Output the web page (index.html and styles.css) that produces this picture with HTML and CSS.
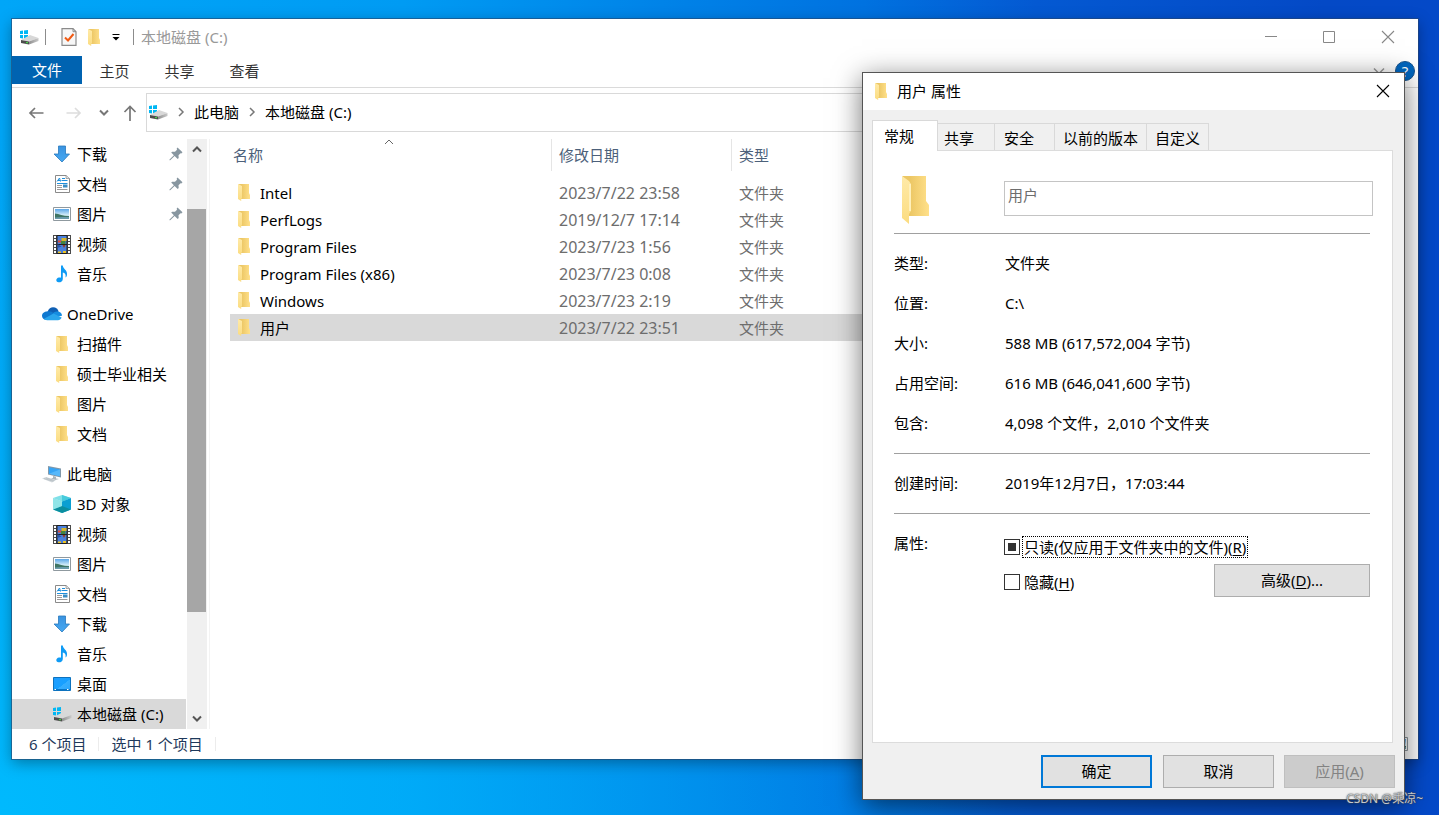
FILE: index.html
```html
<!DOCTYPE html>
<html lang="zh-CN">
<head>
<meta charset="utf-8">
<meta name="viewport" content="width=device-width, initial-scale=1">
<title>本地磁盘 (C:)</title>
<link rel="stylesheet" href="styles.css">
</head>
<body>
<svg class="defs" aria-hidden="true">
  <defs>
    <linearGradient id="g-folder" x1="0" x2="1" y1="0" y2="0"><stop offset="0.3" stop-color="#ecc765"/><stop offset="1" stop-color="#ffe08a"/></linearGradient>
    <linearGradient id="g-flap" x1="0" x2="0" y1="0" y2="1"><stop offset="0" stop-color="#ffeaa8"/><stop offset="1" stop-color="#fbdc80"/></linearGradient>
    <linearGradient id="g-down" x1="0" x2="0" y1="0" y2="1"><stop offset="0" stop-color="#3a93e0"/><stop offset="1" stop-color="#45a8f2"/></linearGradient>
    <linearGradient id="g-sky" x1="0" x2="0" y1="0" y2="1"><stop offset="0" stop-color="#5aa6e8"/><stop offset="0.6" stop-color="#d4ecf8"/></linearGradient>
    <linearGradient id="g-drive" x1="0" x2="1" y1="0" y2="0"><stop offset="0" stop-color="#8f8f8f"/><stop offset="1" stop-color="#c9c9c9"/></linearGradient>
    <linearGradient id="g-desk" x1="0" x2="1" y1="0" y2="1"><stop offset="0" stop-color="#1f9dff"/><stop offset="0.55" stop-color="#17a0ff"/><stop offset="0.56" stop-color="#35aeff"/><stop offset="1" stop-color="#2ba6fb"/></linearGradient>
  </defs>
  <symbol id="i-folder" viewBox="0 0 12 17">
    <path d="M0 0H11V9L12 11V15H3V3Z" fill="url(#g-folder)"/>
    <path d="M0 0L4 2V14L3.200 15V17L0 15Z" fill="url(#g-flap)"/>
  </symbol>
  <symbol id="i-folder-lg" viewBox="0 0 28 48">
    <path d="M1 0H25V25L28 29V40H8V8Z" fill="url(#g-folder)"/>
    <path d="M1 0L8 5L10 8V35L8 38V48L1 42Z" fill="url(#g-flap)"/>
    <path d="M8 8L10 8V35H8Z" fill="#fff0bb"/>
  </symbol>
  <symbol id="i-drive" viewBox="0 0 20 16">
    <path d="M1 2L4 1.500V5H1ZM5 1.400L9 1V5H5ZM1 6H4V9.500L1 9ZM5 6H9V10L5 9.600Z" fill="#00b7f4"/>
    <path d="M2 11L11 6L19.500 9L10 12.500Z" fill="#d8d8d8"/>
    <path d="M2 11L10 12.500V15.500L2 14Z" fill="#4c4c4c"/>
    <path d="M10 12.500L19.500 9V12L10 15.500Z" fill="url(#g-drive)"/>
    <path d="M7 13h2v1.200H7z" fill="#48d348"/>
  </symbol>
  <symbol id="i-down" viewBox="0 0 18 18">
    <path d="M5.500 1h7v8h4L9 17L1 9h4.500Z" fill="url(#g-down)" stroke="#2878bd" stroke-width="0.800"/>
  </symbol>
  <symbol id="i-doc" viewBox="0 0 18 18">
    <path d="M2.500 0.500H13L16.500 3.500V17.500H2.500Z" fill="#fff" stroke="#8a8a8a"/>
    <path d="M13 0.500V3.500H16.500" fill="#ddd" stroke="#8a8a8a" stroke-width="0.700"/>
    <path d="M4 6.500L6.500 3L7.500 6.500M5 5.500H7.500M9 3.500H12M8.500 5.500H14.500M4 8.500H14.500" fill="none" stroke="#1e8fdc"/>
    <path d="M10 9.500h4.500v3h-4.500z" fill="#3c8ec4"/>
    <path d="M4 10.500H9M4 12.500H9M4 14.500H14.500" stroke="#9a9a9a"/>
  </symbol>
  <symbol id="i-pic" viewBox="0 0 18 18">
    <path d="M0.500 2.500h17v13H0.500z" fill="#fff" stroke="#8f999f"/>
    <path d="M2 4h14v10H2z" fill="url(#g-sky)"/>
    <path d="M2 8.500C6 9 10 11 16 11V14H2Z" fill="#3f7564"/>
    <path d="M2 12.500C7 12 11 12 16 12V14H2Z" fill="#6a9aab"/>
  </symbol>
  <symbol id="i-video" viewBox="0 0 18 19">
    <path d="M0 0h18v19H0z" fill="#4a4a4a"/>
    <path d="M3.500 0h11v19h-11z" fill="#222"/>
    <path d="M4.500 1h9v8h-9zM4.500 10h9v8h-9z" fill="#4a80dc"/>
    <path d="M1 1h2v2H1zM1 4h2v2H1zM1 7h2v2H1zM1 10h2v2H1zM1 13h2v2H1zM1 16h2v2H1zM15 1h2v2h-2zM15 4h2v2h-2zM15 7h2v2h-2zM15 10h2v2h-2zM15 13h2v2h-2zM15 16h2v2h-2z" fill="#fff"/>
    <path d="M8.500 3h5v3h-5z" fill="#d7b52c"/><path d="M5 5.500h3.500V7.500H5z" fill="#e34b34"/><path d="M8 6h4.500v3H8z" fill="#45843f"/>
    <path d="M9.500 10h3l-1.500 3z" fill="#9c3c22"/><path d="M5 16.500h3V18H5zM10 16h3v2h-3z" fill="#f0c422"/><path d="M4.500 9l4 2.500-4 1.500z" fill="#2d56a8"/>
  </symbol>
  <symbol id="i-music" viewBox="0 0 18 18">
    <path d="M8 0.500H9.800C10 4 14.500 5 14 9.500C14 11 13.300 12 12.500 12.500C13.200 9.500 12 8 9.800 7.500V14C9.800 16.500 7.500 17.500 5.500 17.300C2.500 17 2.500 13 6 12.500C7 12.300 7.500 12.500 8 12.700Z" fill="#0f9bf5"/>
  </symbol>
  <symbol id="i-cloud" viewBox="0 0 20 14">
    <path d="M5.500 5C6.500 1.500 9 0.300 11 0.300C14 0.300 16 2.200 16.600 4.600L11 8Z" fill="#0f5fb4"/>
    <path d="M5 4.500C8 4 10 5 12 6.500L4 12.800C1.500 12.700 0 11 0 8.800C0 6.300 2.500 4.500 5 4.500Z" fill="#1079d0"/>
    <path d="M11 6C13 4.500 15 4.300 16.500 4.500C19 5 20 7 20 8.800L13 10Z" fill="#168ce0"/>
    <path d="M2 11.800L11.500 6.400L19.600 10.500C19 12.500 17.500 13.200 16 13.200H5C3.800 13.200 2.800 12.800 2 11.800Z" fill="#2aa5ec"/>
  </symbol>
  <symbol id="i-pc" viewBox="0 0 20 18">
    <path d="M6 1L19 3.500V12.500L6 9.500Z" fill="#8098aa"/>
    <path d="M7 2.200L18 4.500V11.300L7 8.700Z" fill="#36a4f5"/>
    <path d="M7 8.700L18 4.500V11.300Z" fill="#57b8fa"/>
    <path d="M11 11L14 11.700V13.500L17 14L13 15L9 13.500L11 13Z" fill="#aab4ba"/>
    <path d="M0 13.500L4 12L14 15L10 17.500Z" fill="#d3d9dd"/>
    <path d="M2 13.600L11.500 16.300M4 12.900L12.500 15.600" stroke="#a9b3b9" stroke-width="0.600"/>
  </symbol>
  <symbol id="i-cube" viewBox="0 0 18 18">
    <path d="M9 0L18 3L9 6.500L0 3Z" fill="#7fe0e8"/>
    <path d="M9 0L18 3L9 6.500Z" fill="#47cbdc"/>
    <path d="M0 3L9 6.500V18L0 14.500Z" fill="#58d7dd"/>
    <path d="M18 3L9 6.500V18L18 14.500Z" fill="#0a9fd2"/>
    <path d="M0 14.500L9 11L18 14.500L9 18Z" fill="#0b8e9f"/>
    <path d="M0 14.500L9 11V6.500L0 3Z" fill="#b5eef0" opacity="0.600"/>
  </symbol>
  <symbol id="i-desk" viewBox="0 0 18 18">
    <path d="M0.500 2.500h17v13H0.500z" fill="url(#g-desk)" stroke="#0d72be"/>
    <path d="M1 14.500h16" stroke="#0876c8"/><path d="M1.500 14.500h1.500M14 14.500h1.500" stroke="#fff"/>
  </symbol>
  <symbol id="i-pin" viewBox="0 0 14 14">
    <path d="M8.500 0.500L13.500 5.200L12.300 6.400L11.500 6.200L9.500 8.300L9.700 11L8.700 12L5.600 9L1.200 13.300L0.500 13.300V12.500L4.900 8.300L2.200 5.600L3.200 4.700L6 4.800L8 2.800L7.700 1.400Z" fill="#8796a0"/>
  </symbol>
  <symbol id="i-close" viewBox="0 0 14 14"><path d="M1 1L13 13M13 1L1 13" fill="none" stroke="currentColor" stroke-width="1.100"/></symbol>
  <symbol id="i-chev" viewBox="0 0 12 8"><path d="M2 1.500L6 5.500L10 1.500" fill="none" stroke="currentColor" stroke-width="2"/></symbol>
  <symbol id="i-right" viewBox="0 0 8 12"><path d="M2 2L6 6L2 10" fill="none" stroke="currentColor" stroke-width="1.500"/></symbol>
</svg>

<main class="desktop">
  <section class="window" aria-label="本地磁盘 (C:)">
    <header class="titlebar">
      <svg class="ic-drive"><use href="#i-drive"/></svg>
      <span class="rule"></span>
      <button class="quick" aria-label="属性"><svg class="ic-props" viewBox="0 0 16 18"><path d="M1 0.700H12L15 3.700V17.300H1Z" fill="#f7f7f7" stroke="#8b8b8b" stroke-width="1.200"/><path d="M12 0.700V3.700H15" fill="none" stroke="#8b8b8b"/><path d="M4 9.500L7 12.500L12.500 6" fill="none" stroke="#f05a14" stroke-width="2"/></svg></button>
      <button class="quick" aria-label="新建文件夹"><svg class="ic-folder"><use href="#i-folder"/></svg></button>
      <button class="quick" aria-label="自定义快速访问工具栏"><svg class="ic-menu" viewBox="0 0 8 8"><path d="M0.500 1.500H7.500" stroke="#000"/><path d="M0.500 4H7.500L4 7.500Z" fill="#000"/></svg></button>
      <span class="rule"></span>
      <h1 class="title">本地磁盘 (C:)</h1>
      <div class="controls">
        <button aria-label="最小化"><svg class="ic-ctl" viewBox="0 0 14 14"><path d="M1 6.500H13" stroke="currentColor"/></svg></button>
        <button aria-label="最大化"><svg class="ic-ctl" viewBox="0 0 14 14"><path d="M1.500 1.500h11v11h-11z" fill="none" stroke="currentColor"/></svg></button>
        <button aria-label="关闭"><svg class="ic-ctl"><use href="#i-close"/></svg></button>
      </div>
    </header>
    <nav class="ribbon">
      <button class="ribbon-tab file">文件</button>
      <button class="ribbon-tab">主页</button>
      <button class="ribbon-tab">共享</button>
      <button class="ribbon-tab">查看</button>
      <span class="grow"></span>
      <button class="expand" aria-label="展开功能区"><svg class="ic-expand" viewBox="0 0 12 8"><path d="M1 1.500L6 6.500L11 1.500" fill="none" stroke="currentColor" stroke-width="1.500"/></svg></button>
      <button class="help" aria-label="帮助">?</button>
    </nav>
    <div class="navbar">
      <div class="arrows">
        <button aria-label="后退"><svg class="ic-arrow" viewBox="0 0 16 16"><path d="M15.500 8H2M7 3L2 8L7 13" fill="none" stroke="#777" stroke-width="1.700"/></svg></button>
        <button aria-label="前进"><svg class="ic-arrow" viewBox="0 0 16 16"><path d="M0.500 8H14M9 3L14 8L9 13" fill="none" stroke="#ddd" stroke-width="1.700"/></svg></button>
        <button aria-label="最近位置"><svg class="ic-chev"><use href="#i-chev"/></svg></button>
        <button aria-label="上移"><svg class="ic-arrow" viewBox="0 0 16 16"><path d="M8 16V2M2.500 7L8 1.500L13.500 7" fill="none" stroke="#777" stroke-width="1.700"/></svg></button>
      </div>
      <div class="address">
        <svg class="ic-drive"><use href="#i-drive"/></svg>
        <svg class="ic-right"><use href="#i-right"/></svg>
        <a href="#pc">此电脑</a>
        <svg class="ic-right"><use href="#i-right"/></svg>
        <a href="#c">本地磁盘 (C:)</a>
      </div>
    </div>
    <div class="panes">
      <nav class="tree">
        <ul>
          <li><svg class="ic"><use href="#i-down"/></svg>下载<svg class="pin"><use href="#i-pin"/></svg></li>
          <li><svg class="ic"><use href="#i-doc"/></svg>文档<svg class="pin"><use href="#i-pin"/></svg></li>
          <li><svg class="ic"><use href="#i-pic"/></svg>图片<svg class="pin"><use href="#i-pin"/></svg></li>
          <li><svg class="ic tall"><use href="#i-video"/></svg>视频</li>
          <li><svg class="ic"><use href="#i-music"/></svg>音乐</li>
        </ul>
        <ul>
          <li class="root"><svg class="ic-root"><use href="#i-cloud"/></svg>OneDrive</li>
          <li><svg class="ic small"><use href="#i-folder"/></svg>扫描件</li>
          <li><svg class="ic small"><use href="#i-folder"/></svg>硕士毕业相关</li>
          <li><svg class="ic small"><use href="#i-folder"/></svg>图片</li>
          <li><svg class="ic small"><use href="#i-folder"/></svg>文档</li>
        </ul>
        <ul>
          <li class="root"><svg class="ic-root"><use href="#i-pc"/></svg>此电脑</li>
          <li><svg class="ic"><use href="#i-cube"/></svg>3D 对象</li>
          <li><svg class="ic tall"><use href="#i-video"/></svg>视频</li>
          <li><svg class="ic"><use href="#i-pic"/></svg>图片</li>
          <li><svg class="ic"><use href="#i-doc"/></svg>文档</li>
          <li><svg class="ic"><use href="#i-down"/></svg>下载</li>
          <li><svg class="ic"><use href="#i-music"/></svg>音乐</li>
          <li><svg class="ic"><use href="#i-desk"/></svg>桌面</li>
          <li class="drive selected"><svg class="ic-drive"><use href="#i-drive"/></svg>本地磁盘 (C:)</li>
        </ul>
      </nav>
      <div class="scrollbar">
        <button aria-label="向上滚动"><svg class="ic-scroll up"><use href="#i-chev"/></svg></button>
        <span class="track-before"></span>
        <span class="thumb"></span>
        <span class="track-after"></span>
        <button aria-label="向下滚动"><svg class="ic-scroll"><use href="#i-chev"/></svg></button>
      </div>
      <div class="list">
        <table class="files">
          <colgroup><col class="col-name"><col class="col-date"><col></colgroup>
          <thead>
            <tr>
              <th><div class="head">名称<svg class="sort" viewBox="0 0 10 6"><path d="M1 5L5 1L9 5" fill="none" stroke="#666"/></svg></div></th>
              <th><div class="head">修改日期</div></th>
              <th><div class="head last">类型</div></th>
            </tr>
          </thead>
          <tbody>
            <tr><td><div class="name"><svg class="ic-folder"><use href="#i-folder"/></svg>Intel</div></td><td class="date">2023/7/22 23:58</td><td>文件夹</td></tr>
            <tr><td><div class="name"><svg class="ic-folder"><use href="#i-folder"/></svg>PerfLogs</div></td><td class="date">2019/12/7 17:14</td><td>文件夹</td></tr>
            <tr><td><div class="name"><svg class="ic-folder"><use href="#i-folder"/></svg>Program Files</div></td><td class="date">2023/7/23 1:56</td><td>文件夹</td></tr>
            <tr><td><div class="name"><svg class="ic-folder"><use href="#i-folder"/></svg>Program Files (x86)</div></td><td class="date">2023/7/23 0:08</td><td>文件夹</td></tr>
            <tr><td><div class="name"><svg class="ic-folder"><use href="#i-folder"/></svg>Windows</div></td><td class="date">2023/7/23 2:19</td><td>文件夹</td></tr>
            <tr class="selected"><td><div class="name"><svg class="ic-folder"><use href="#i-folder"/></svg>用户</div></td><td class="date">2023/7/22 23:51</td><td>文件夹</td></tr>
          </tbody>
        </table>
      </div>
    </div>
    <footer class="status">
      <span>6 个项目</span>
      <span>选中 1 个项目</span>
      <button class="view" aria-label="大缩略图"><svg class="ic"><use href="#i-pic"/></svg></button>
    </footer>
  </section>

  <section class="dialog" role="dialog" aria-label="用户 属性">
    <header class="dialog-title">
      <svg class="ic-folder"><use href="#i-folder"/></svg>
      <h2 class="dialog-name">用户 属性</h2>
      <button class="dialog-close" aria-label="关闭"><svg class="ic-ctl"><use href="#i-close"/></svg></button>
    </header>
    <div class="tabs" role="tablist">
      <button class="tab active" role="tab" aria-selected="true">常规</button>
      <button class="tab t-share" role="tab">共享</button>
      <button class="tab t-safe" role="tab">安全</button>
      <button class="tab" role="tab">以前的版本</button>
      <button class="tab" role="tab">自定义</button>
    </div>
    <div class="sheet">
      <div class="identity">
        <svg class="big-folder"><use href="#i-folder-lg"/></svg>
        <input class="name-box" type="text" value="用户" aria-label="文件夹名称">
      </div>
      <dl class="facts">
        <dt>类型:</dt><dd>文件夹</dd>
        <dt>位置:</dt><dd>C:\</dd>
        <dt>大小:</dt><dd>588 MB (617,572,004 字节)</dd>
        <dt>占用空间:</dt><dd>616 MB (646,041,600 字节)</dd>
        <dt>包含:</dt><dd>4,098 个文件，2,010 个文件夹</dd>
      </dl>
      <dl class="facts">
        <dt>创建时间:</dt><dd>2019年12月7日，17:03:44</dd>
      </dl>
      <div class="attrs">
        <span class="attrs-label">属性:</span>
        <div class="checks">
          <label class="check"><input class="mixed" type="checkbox"><span class="focus">只读(仅应用于文件夹中的文件)(<u>R</u>)</span></label>
          <label class="check"><input type="checkbox"><span>隐藏(<u>H</u>)</span></label>
        </div>
        <button class="btn advanced">高级(<u>D</u>)...</button>
      </div>
    </div>
    <footer class="actions">
      <button class="btn primary">确定</button>
      <button class="btn">取消</button>
      <button class="btn" disabled>应用(<u>A</u>)</button>
    </footer>
  </section>
  <p class="watermark">CSDN @乘凉~</p>
</main>
</body>
</html>
```

FILE: styles.css
```css
* { box-sizing: border-box; }
body {
  margin: 0;
  font: 15px/20px "Noto Sans", "Noto Sans CJK SC", sans-serif;
  color: #000;
}
h1, h2, p, ul, dl, dd { margin: 0; padding: 0; font-size: inherit; font-weight: 400; }
ul { list-style: none; }
button, input { font: inherit; color: inherit; }
button { margin: 0; padding: 0; border: 0; background: none; display: flex; align-items: center; justify-content: center; white-space: nowrap; }
svg { display: block; flex: none; }
a { color: inherit; text-decoration: none; }
.defs { position: absolute; width: 0; height: 0; }

.desktop {
  position: relative;
  height: 100vh;
  min-height: 780px;
  overflow: hidden;
  background:
    radial-gradient(ellipse 70% 90% at 0 100%, rgba(0, 192, 255, 0.75), rgba(0, 180, 250, 0.5) 50%, rgba(0, 170, 250, 0)),
    linear-gradient(to right, #00a6f8 0, #009bf3 28%, #0083e8 46%, #0072e0 60%, #0459d2 72%, #0449c6 92%, #0449c8);
}

/* Explorer window */
.window {
  position: absolute;
  inset: 19px 21px 56px 12px;
  display: flex;
  flex-direction: column;
  background: #fff;
  outline: 1px solid rgba(40, 70, 110, 0.6);
  box-shadow: 0 4px 14px rgba(0, 0, 0, 0.35);
}
.titlebar { display: flex; align-items: center; height: 37px; padding: 0 0 1px 7px; color: #999; }
.rule { width: 1px; height: 16px; margin: 0 7px 0 6px; background: #8c8c8c; }
.ic-drive { width: 20px; height: 16px; }
.ic-props { width: 16px; height: 18px; margin: 0 11px 0 8px; }
.ic-folder { width: 12px; height: 17px; }
.ic-menu { width: 8px; height: 8px; margin: 0 7px 0 12px; }
.title { flex: 1; }
.controls { display: flex; color: #888; }
.controls button { width: 58px; height: 36px; }
.controls button:last-child { width: 60px; }
.ic-ctl { width: 14px; height: 14px; }
.ribbon { display: flex; align-items: flex-start; height: 32px; padding-right: 3px; border-bottom: 1px solid #dadada; color: #333; }
.ribbon-tab { width: 65px; height: 30px; }
.ribbon-tab.file { width: 70px; height: 28px; background: #0063b1; color: #fff; }
.grow { flex: 1; }
.expand { width: 20px; height: 30px; margin-right: 6px; color: #999; }
.ic-expand { width: 12px; height: 8px; }
.help { width: 20px; height: 20px; margin-top: 5px; border: 1px solid #17528c; border-radius: 50%; background: #0067c0; color: #fff; }
.navbar { display: flex; padding: 5px 13px 0 0; height: 51px; }
.arrows { display: flex; align-items: center; gap: 22px; width: 134px; height: 39px; padding-left: 16px; color: #777; }
.arrows button:nth-child(3) { margin-right: -10px; margin-left: -6px; }
.ic-arrow { width: 16px; height: 16px; }
.ic-chev { width: 12px; height: 8px; }
.address { flex: 1; display: flex; align-items: center; height: 39px; padding: 0 0 1px 1px; border: 1px solid #d9d9d9; }
.ic-right { width: 8px; height: 12px; margin: 0 9px; color: #777; }

.panes { flex: 1; display: flex; min-height: 0; }
.tree { width: 175px; padding-right: 1px; overflow: hidden; white-space: nowrap; }
.tree ul + ul { margin-top: 10px; }
.tree li { display: flex; align-items: center; height: 30px; padding-left: 41px; }
.tree li.root { padding-left: 30px; }
.tree li.drive { gap: 5px; padding-left: 40px; }
.ic { width: 18px; height: 18px; margin-right: 6px; }
.ic.tall { height: 19px; }
.ic.small { height: 17px; }
.ic-root { width: 20px; height: 18px; margin-right: 5px; }
.pin { width: 14px; height: 14px; margin: 0 3px 0 auto; }
.tree .selected, .files .selected { background: #d9d9d9; }
.scrollbar { display: flex; flex-direction: column; width: 20px; background: #f0f0f0; color: #555; }
.scrollbar button { height: 20px; margin-right: 1px; }
.ic-scroll { width: 12px; height: 8px; }
.ic-scroll.up { transform: rotate(180deg); }
.track-before { flex: 50; }
.thumb { flex: 403; margin-right: 1px; background: #a6a6a6; }
.track-after { flex: 97; }
.list { flex: 1; min-width: 0; margin-left: 2px; padding: 0 20px; border-left: 1px solid #f3f3f3; }
.files { width: 100%; table-layout: fixed; border-collapse: collapse; color: #6d6d6d; }
.col-name { width: 322px; }
.col-date { width: 180px; }
.files th { padding: 0 0 8px; text-align: left; font-weight: 400; color: #4c607a; }
.head { position: relative; height: 32px; padding: 6px 0 0 7px; border-right: 1px solid #e5e5e5; }
th:first-child .head { padding-left: 3px; }
.head.last { border: 0; }
.sort { position: absolute; top: 0; left: 50%; width: 10px; height: 6px; margin-left: -7px; }
.files td { height: 27px; padding: 0 0 0 7px; }
.files .date { font-size: 16px; }
.name { display: flex; align-items: center; gap: 10px; padding-left: 1px; color: #000; }
.name .ic-folder { margin-bottom: 1px; }

.status { display: flex; align-items: center; height: 30px; padding: 0 10px 0 5px; color: #1e395b; }
.status span { padding: 0 12px; line-height: 14px; border-right: 1px solid #ececec; }
.view { margin-left: auto; }
.view .ic { margin: 0; }

/* Properties dialog */
.dialog {
  position: absolute;
  top: 72px;
  right: 34px;
  bottom: 15px;
  width: 543px;
  display: flex;
  flex-direction: column;
  border: 1px solid #555;
  background: #f0f0f0;
  box-shadow: 0 6px 26px rgba(0, 0, 0, 0.55);
}
.dialog-title { display: flex; align-items: center; gap: 10px; height: 37px; padding: 0 0 1px 12px; background: #fff; }
.dialog-name { flex: 1; }
.dialog-close { width: 42px; height: 36px; }
.tabs { display: flex; align-items: flex-end; height: 40px; padding: 10px 0 0 9px; }
.tab { height: 27px; padding: 2px 8px 0; border: 1px solid #d9d9d9; border-left: 0; border-bottom: 0; }
.tab.active { position: relative; width: 66px; height: 31px; margin-bottom: -1px; padding: 0 11px; border-left: 1px solid #d9d9d9; background: #fff; justify-content: flex-start; }
.tab.t-share { width: 57px; padding: 2px 6px 0; justify-content: flex-start; }
.tab.t-safe { width: 60px; padding: 2px 9px 0; justify-content: flex-start; }
.sheet { flex: 1; margin: 0 11px 0 9px; padding: 25px 22px 0 21px; border: 1px solid #dcdcdc; background: #fff; }
.identity { display: grid; grid-template-columns: 110px 1fr; height: 57px; margin-right: -3px; }
.big-folder { width: 28px; height: 48px; margin-left: 7px; }
.name-box { width: 100%; height: 35px; margin-top: 5px; padding: 0 3px 8px; border: 1px solid #c4c4c4; border-radius: 0; background: #fff; color: #6d6d6d; }
.facts { display: grid; grid-template-columns: 111px 1fr; padding: 9px 0 10px; border-top: 1px solid #a0a0a0; line-height: 40px; }
.attrs { display: grid; grid-template-columns: 110px 1fr; padding-top: 19px; border-top: 1px solid #a0a0a0; }
.checks { display: flex; flex-direction: column; gap: 13px; padding-top: 3px; }
.check { display: flex; align-items: center; gap: 3px; height: 22px; white-space: nowrap; }
.check input { appearance: none; width: 16px; height: 16px; margin: 0; border: 1px solid #333; background: #fff; }
.check input.mixed { background: #333; box-shadow: inset 0 0 0 3px #fff; }
.check span { padding: 0 1px; }
.check .focus { outline: 1px dotted #000; }
.btn { width: 111px; height: 33px; padding-bottom: 1px; border: 1px solid #adadad; background: #e1e1e1; }
.btn.advanced { grid-column: 2; justify-self: end; width: 156px; margin-top: -29px; z-index: 1; }
.btn.primary { border: 2px solid #0078d7; }
.btn:disabled { border-color: #bfbfbf; background: #ccc; color: #838383; }
.actions { display: flex; justify-content: flex-end; gap: 10px; padding: 12px 9px 11px; }
.actions .primary { margin-right: 1px; }
u { text-underline-offset: 2px; }
.watermark { position: absolute; right: 16px; bottom: 6px; font-size: 12px; color: #c4c8ce; text-shadow: 0 0 2px #444, 0 0 1px #444; }
```
